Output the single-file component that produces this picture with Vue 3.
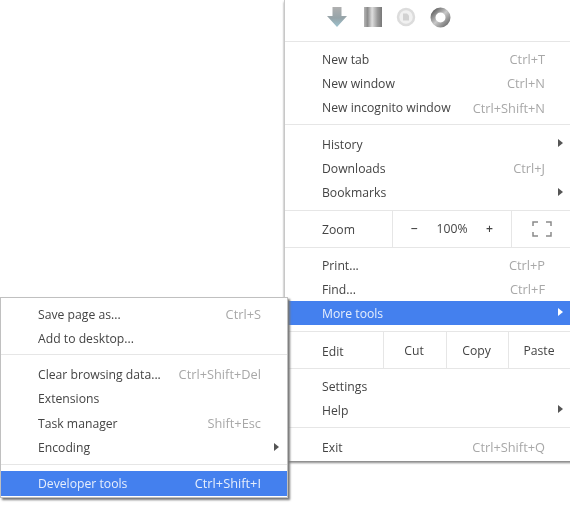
<template>
  <div class="page">
    <div class="menu main-menu">
      <div class="icon-row">
        <svg class="download-icon" width="22" height="22" viewBox="0 0 22 22">
          <defs>
            <linearGradient id="arrowFill" x1="0" y1="0" x2="0" y2="1">
              <stop offset="0" stop-color="#b0b0b0" />
              <stop offset="0.55" stop-color="#96a4a9" />
              <stop offset="1" stop-color="#9cc2ce" />
            </linearGradient>
          </defs>
          <path d="M6.500 1h9v9H21L11 21 1 10h5.500z" fill="url(#arrowFill)" />
        </svg>
        <svg width="18" height="20" viewBox="0 0 18 20">
          <defs>
            <linearGradient id="barFill" x1="0" y1="0" x2="1" y2="0">
              <stop offset="0" stop-color="#b5b5b5" />
              <stop offset="0.2" stop-color="#8c8c8c" />
              <stop offset="0.45" stop-color="#dedede" />
              <stop offset="0.75" stop-color="#9a9a9a" />
              <stop offset="1" stop-color="#777" />
            </linearGradient>
          </defs>
          <rect width="18" height="20" fill="url(#barFill)" />
        </svg>
        <svg width="20" height="20" viewBox="0 0 20 20">
          <circle cx="10" cy="10" r="8" fill="#f1f1f1" stroke="#dcdcdc" stroke-width="2.500" />
          <path d="M7 6.500h4l2 2v5H7z" fill="#d2d2d2" />
        </svg>
        <svg width="21" height="21" viewBox="0 0 21 21">
          <defs>
            <linearGradient id="ringFill" x1="0" y1="0" x2="1" y2="1">
              <stop offset="0" stop-color="#5f5f5f" />
              <stop offset="0.5" stop-color="#c9c9c9" />
              <stop offset="1" stop-color="#6f6f6f" />
            </linearGradient>
          </defs>
          <circle cx="10.500" cy="10.500" r="7.500" fill="none" stroke="url(#ringFill)" stroke-width="5" />
        </svg>
      </div>

      <div class="section first">
        <div v-for="item in newItems" :key="item.label" class="item">
          <span>{{ item.label }}</span>
          <span class="shortcut">{{ item.shortcut }}</span>
        </div>
      </div>

      <div class="section second">
        <div v-for="item in historyItems" :key="item.label" class="item">
          <span>{{ item.label }}</span>
          <span class="shortcut">{{ item.shortcut }}</span>
          <i v-if="item.sub" class="arrow"></i>
        </div>
      </div>

      <div class="button-row zoom-row">
        <div class="row-label zoom-label">Zoom</div>
        <div class="zoom-controls">
          <span class="zoom-sign">−</span>
          <span>100%</span>
          <span class="zoom-sign">+</span>
        </div>
        <div class="fullscreen">
          <svg width="20" height="16" viewBox="0 0 20 16" fill="none" stroke="#8a8a8a" stroke-width="1.500">
            <path d="M1 5V1h5M14 1h5v4M19 11v4h-5M6 15H1v-4" />
          </svg>
        </div>
      </div>

      <div class="section third">
        <div class="item"><span>Print...</span><span class="shortcut">Ctrl+P</span></div>
        <div class="item"><span>Find...</span><span class="shortcut">Ctrl+F</span></div>
        <div class="item active"><span>More tools</span><i class="arrow"></i></div>
      </div>

      <div class="button-row edit-row">
        <div class="row-label edit-label">Edit</div>
        <div class="edit-btn cut">Cut</div>
        <div class="edit-btn copy">Copy</div>
        <div class="edit-btn paste">Paste</div>
      </div>

      <div class="section fourth">
        <div class="item"><span>Settings</span></div>
        <div class="item"><span>Help</span><i class="arrow"></i></div>
      </div>

      <div class="section last">
        <div class="item"><span>Exit</span><span class="shortcut">Ctrl+Shift+Q</span></div>
      </div>
    </div>

    <div class="menu sub-menu">
      <div class="section sub-first">
        <div class="item"><span>Save page as...</span><span class="shortcut">Ctrl+S</span></div>
        <div class="item"><span>Add to desktop...</span></div>
      </div>
      <div class="section sub-second">
        <div v-for="item in toolItems" :key="item.label" class="item">
          <span>{{ item.label }}</span>
          <span class="shortcut">{{ item.shortcut }}</span>
          <i v-if="item.sub" class="arrow"></i>
        </div>
      </div>
      <div class="sub-last">
        <div class="item active"><span>Developer tools</span><span class="shortcut">Ctrl+Shift+I</span></div>
      </div>
    </div>
  </div>
</template>

<script setup>
const newItems = [
  { label: 'New tab', shortcut: 'Ctrl+T' },
  { label: 'New window', shortcut: 'Ctrl+N' },
  { label: 'New incognito window', shortcut: 'Ctrl+Shift+N' }
]

const historyItems = [
  { label: 'History', sub: true },
  { label: 'Downloads', shortcut: 'Ctrl+J' },
  { label: 'Bookmarks', sub: true }
]

const toolItems = [
  { label: 'Clear browsing data...', shortcut: 'Ctrl+Shift+Del' },
  { label: 'Extensions' },
  { label: 'Task manager', shortcut: 'Shift+Esc' },
  { label: 'Encoding', sub: true }
]
</script>

<style>
html,
body {
  margin: 0;
  background: #fff;
}
</style>

<style scoped>
.page {
  position: relative;
  width: 570px;
  height: 507px;
  overflow: hidden;
  background: #fff;
  font-family: "Open Sans", "Noto Sans", sans-serif;
  font-size: 12.200px;
  color: #444;
  filter: blur(0.3px);
}

.menu {
  box-sizing: border-box;
  background: #fff;
}

.main-menu {
  width: 290px;
  height: 461px;
  margin-left: 284px;
  border-left: 1px solid #c8c8c8;
  box-shadow: 0 2px 2px #8a8a8a;
}

.icon-row {
  box-sizing: border-box;
  height: 41px;
  display: flex;
  align-items: center;
  gap: 14px;
  padding: 0 0 7px 41px;
}

.download-icon {
  margin-right: 2px;
}

.section {
  border-top: 1px solid #e6e6e6;
}

.first {
  height: 83px;
  padding-top: 5px;
  box-sizing: border-box;
}

.second {
  height: 86px;
  padding-top: 7px;
  box-sizing: border-box;
}

.third {
  height: 84px;
  padding-top: 4px;
  box-sizing: border-box;
}

.third .item {
  padding-top: 2px;
}

.fourth {
  height: 59px;
  padding-top: 5px;
  box-sizing: border-box;
}

.last {
  padding-top: 7px;
}

.item {
  height: 24.300px;
  display: flex;
  align-items: center;
  justify-content: space-between;
  padding: 0 26px 0 37px;
  position: relative;
}

.main-menu .item {
  width: 286px;
  box-sizing: border-box;
}

.sub-menu .item {
  height: 24.500px;
}

.shortcut {
  color: #a8a8a8;
  font-size: 12.800px;
}

.active {
  background: #4480ee;
  color: #e6eefc;
}

.active .shortcut {
  color: #e6eefc;
}

.arrow {
  position: absolute;
  right: 8px;
  top: 50%;
  margin-top: -5px;
  border-left: 5px solid #555;
  border-top: 4.500px solid transparent;
  border-bottom: 4.500px solid transparent;
}

.active .arrow {
  border-left-color: #fff;
}

.button-row {
  display: flex;
  align-items: stretch;
  height: 37px;
  width: 286px;
  box-sizing: border-box;
  border-top: 1px solid #e6e6e6;
}

.row-label {
  display: flex;
  align-items: center;
  padding-left: 37px;
  box-sizing: border-box;
}

.zoom-label {
  width: 107px;
}

.zoom-controls {
  width: 119px;
  box-sizing: border-box;
  display: flex;
  align-items: center;
  justify-content: space-between;
  padding: 0 18px 2px 18px;
  border-left: 1px solid #e6e6e6;
}

.zoom-sign {
  font-weight: 600;
}

.fullscreen {
  flex: 1;
  display: flex;
  align-items: center;
  justify-content: center;
  border-left: 1px solid #e6e6e6;
}

.edit-label {
  width: 98px;
  padding-top: 2px;
}

.edit-btn {
  display: flex;
  align-items: center;
  justify-content: center;
  box-sizing: border-box;
  border-left: 1px solid #e6e6e6;
  padding-right: 2px;
}

.cut {
  width: 63px;
}

.copy {
  width: 62px;
}

.paste {
  flex: 1;
}

.sub-menu {
  position: absolute;
  left: 0;
  top: 297px;
  width: 288px;
  height: 201px;
  border: 1px solid #c0c0c0;
  box-shadow: 2px 2px 2px #777;
}

.sub-first {
  border-top: 0;
  height: 56px;
  padding-top: 4px;
  box-sizing: border-box;
}

.sub-second {
  height: 110px;
  padding-top: 7px;
  box-sizing: border-box;
}

.sub-last {
  border-top: 1px solid #e6e6e6;
  padding-top: 6px;
}
</style>
